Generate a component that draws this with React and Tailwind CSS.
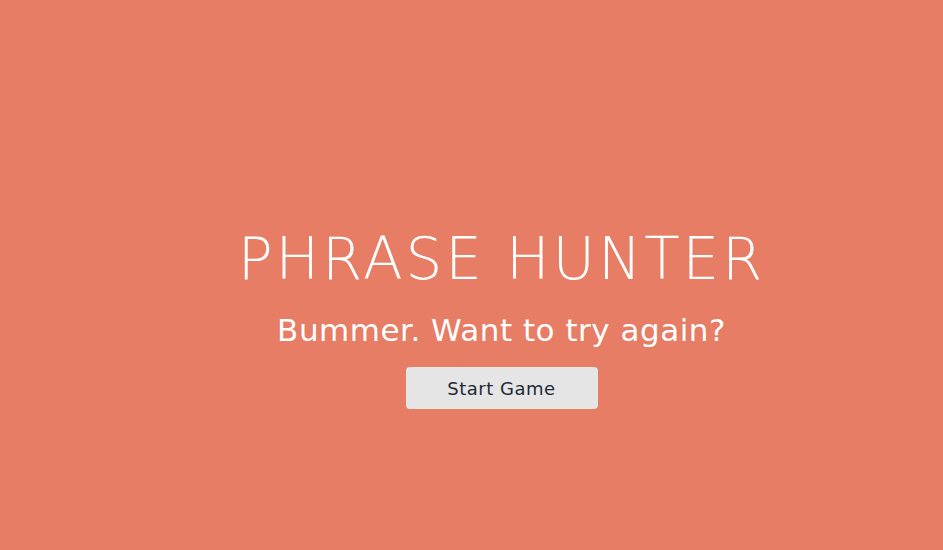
export default function App() {
  return (
    <div
      className="w-full h-[550px] bg-[#e77d64] flex flex-col items-center pl-[60px] pt-[224px] text-white overflow-hidden"
      style={{ fontFamily: '"DejaVu Sans", "Noto Sans", sans-serif' }}
    >
      <h1 className="text-[58px] leading-[70px] font-extralight tracking-[2.9px]">PHRASE HUNTER</h1>
      <h2 className="mt-[16px] text-[31px] leading-[40px] font-normal tracking-[0.5px]">Bummer. Want to try again?</h2>
      <button className="mt-[17px] w-[192px] h-[42px] bg-[#e5e5e5] rounded-[4px] text-[#1f2a36] text-[18px] tracking-[0.5px]">
        Start Game
      </button>
    </div>
  );
}
